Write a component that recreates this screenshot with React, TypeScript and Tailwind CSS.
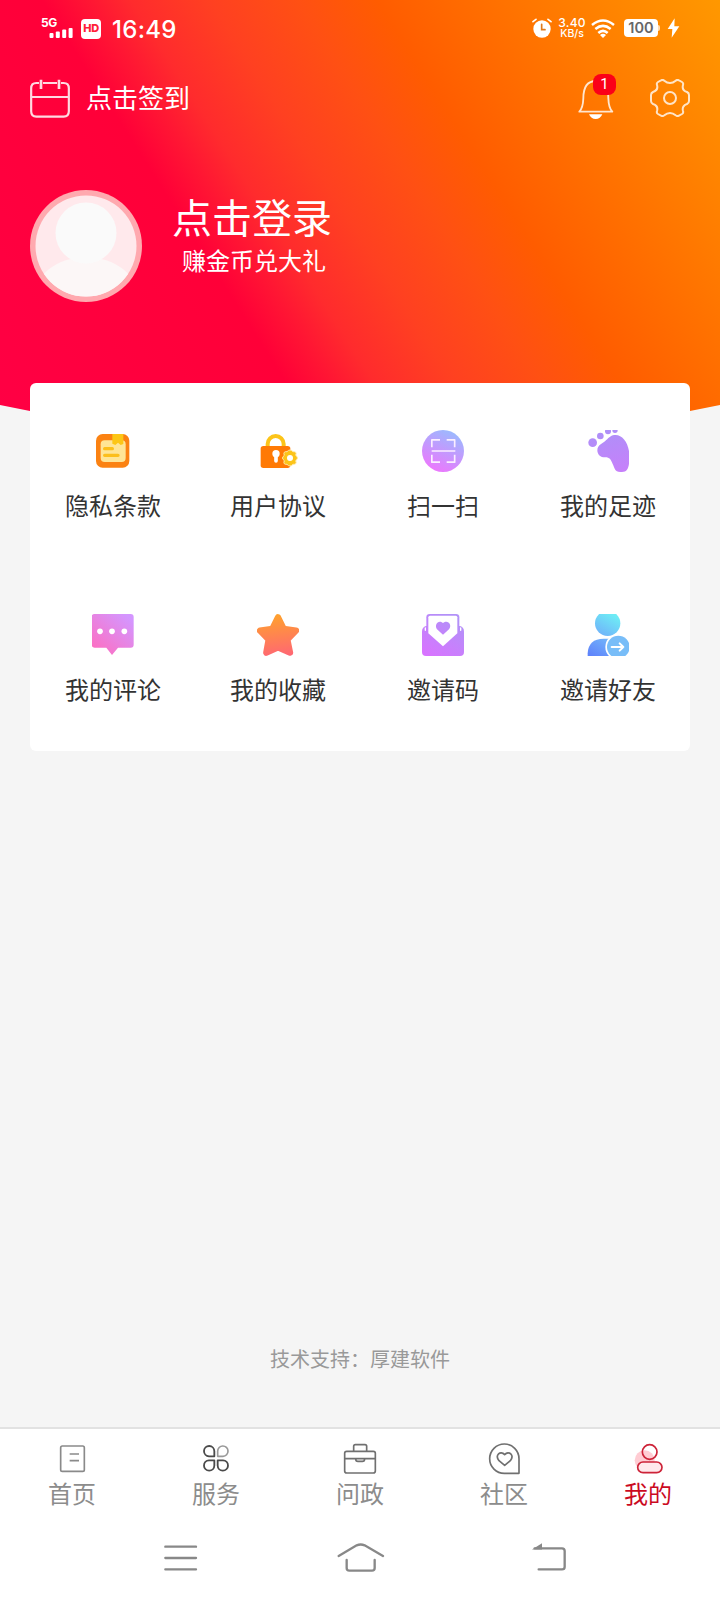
import type { ReactNode } from 'react'

interface MenuEntry {
  readonly label: string
  readonly icon: ReactNode
}

interface TabEntry extends MenuEntry {
  readonly active?: boolean
}

/* ---------- status bar ---------- */

function SignalIcon() {
  return (
    <div className="flex h-[22px] w-8 flex-col">
      <span className="h-[11px] font-['Inter',sans-serif] text-[12px] leading-[11px] font-bold tracking-[-0.3px]">5G</span>
      <svg className="h-[11px] w-8" viewBox="0 0 32 11" fill="white">
        <rect x="8.5" y="5" width="4" height="5" rx="1" />
        <rect x="14.8" y="3.6" width="4" height="6.4" rx="1" />
        <rect x="21.2" y="1.6" width="4" height="8.4" rx="1" />
        <rect x="27.6" y="0" width="4" height="10" rx="1" />
      </svg>
    </div>
  )
}

function AlarmIcon() {
  return (
    <svg className="size-5" viewBox="0 0 60 60" fill="none" strokeLinecap="round">
      <circle cx="30" cy="33" r="26" fill="white" />
      <path d="M3 11 12 4M57 11 48 4" stroke="white" strokeWidth="5" />
      <path d="M29 19v16h10" stroke="#e07a1c" strokeWidth="5" />
    </svg>
  )
}

function WifiIcon() {
  return (
    <svg className="h-[19px] w-6" viewBox="0 0 72 57" fill="none" stroke="white" strokeWidth="7.5">
      <path d="M3 18Q36-9 69 18" />
      <path d="M13 30Q36 11 59 30" />
      <path d="M22 42Q36 29 50 42" />
      <path d="M27 48Q36 41 45 48L36 57Z" fill="white" stroke="none" />
    </svg>
  )
}

function StatusBar() {
  return (
    <div className="flex h-14 items-center justify-between pr-10 pl-[41px] text-white">
      <div className="flex items-center">
        <SignalIcon />
        <span className="mt-px ml-2 flex size-5 items-center justify-center rounded-[4px] bg-white font-['Inter',sans-serif] text-[11px] leading-none font-extrabold tracking-tight text-[#ff2038]">
          HD
        </span>
        <span className="mt-[3px] ml-[11px] font-['Inter',sans-serif] text-[24px] leading-none font-medium tracking-[0.3px]">
          16:49
        </span>
      </div>
      <div className="flex items-center">
        <AlarmIcon />
        <div className="ml-[6px] flex w-7 flex-col items-center font-['Inter',sans-serif] font-medium">
          <span className="h-[12px] text-[12px] leading-[12px] tracking-[0.2px]">3.40</span>
          <span className="h-[10px] text-[10.5px] leading-[10px]">KB/s</span>
        </div>
        <div className="ml-[5px]">
          <WifiIcon />
        </div>
        <span className="ml-[9px] flex h-[18px] w-[34px] items-center justify-center rounded-[4px] bg-white font-['Inter',sans-serif] text-[14.5px] leading-none font-semibold text-[#666]">
          100
        </span>
        <span className="h-[6px] w-[2px] rounded-r-sm bg-white/70" />
        <svg className="ml-[7px] h-5 w-[13px]" viewBox="0 0 39 60" fill="white">
          <path d="M23 1 2 33h14l-2 26L37 25H22Z" />
        </svg>
      </div>
    </div>
  )
}

/* ---------- header ---------- */

function CalendarIcon() {
  return (
    <svg className="h-[39px] w-10" viewBox="0 0 120 117" fill="none" stroke="white" strokeWidth="6.5" strokeOpacity=".85">
      <path d="M27 12H19Q3.500 12 3.500 28V97Q3.500 113 19 113H101Q116.500 113 116.500 97V28Q116.500 12 101 12H93M39 12H81M4 54H116" />
      <path d="M33 2v28M87 2v28" strokeWidth="8" />
    </svg>
  )
}

function BellIcon() {
  return (
    <svg className="h-10 w-9" viewBox="0 0 108 120" fill="none" stroke="white" strokeOpacity=".82" strokeWidth="5.5">
      <path d="M4 95Q15 84 16 55C16 20 30 3 54 3S91 20 91 55Q92 84 103 95Z" strokeLinejoin="round" />
      <path d="M33 103H73Q67 117 53 117T33 103Z" fill="white" stroke="none" />
    </svg>
  )
}

function GearIcon() {
  return (
    <svg className="h-[38px] w-10" viewBox="0 0 120 114" fill="none" stroke="white" strokeOpacity=".78" strokeWidth="6" strokeLinejoin="round">
      <path d="M33 4Q38 1 43 5Q51 12 60 12T77 5Q82 1 87 4L96 9Q101 12 99 18C96 29 101 36 111 39Q117 42 117 48V66Q117 72 111 75C101 78 96 86 99 96Q101 102 96 105L87 110Q82 113 77 109Q69 102 60 102T43 109Q38 113 33 110L24 105Q19 102 21 96C24 86 19 78 9 75Q3 72 3 66V48Q3 42 9 39C19 36 24 28 21 18Q19 12 24 9Z" />
      <circle cx="60" cy="57" r="18" />
    </svg>
  )
}

function Avatar() {
  return (
    <svg className="size-28" viewBox="0 0 112 112">
      <clipPath id="avatarClip">
        <circle cx="56" cy="56" r="50.5" />
      </clipPath>
      <circle cx="56" cy="56" r="56" fill="#ffa9af" />
      <circle cx="56" cy="56" r="50.5" fill="#ffe9ec" />
      <g clipPath="url(#avatarClip)">
        <ellipse cx="56" cy="110" rx="53" ry="43" fill="#fcf7f7" />
        <circle cx="56" cy="43" r="30.5" fill="#fafafa" />
      </g>
    </svg>
  )
}

function Header() {
  return (
    <header className="h-[412px] bg-[linear-gradient(57.5deg,#ff0044_0%,#ff0038_31%,#ff1733_36%,#ff2b2d_40%,#ff4021_48%,#ff5013_57%,#ff5c00_65%,#ff9800_100%)] [clip-path:polygon(0_0,100%_0,100%_405px,690px_411px,30px_411px,0_405px)]">
      <StatusBar />
      <div className="flex h-[84px] items-center justify-between px-[30px] text-white">
        <div className="flex items-center gap-4">
          <CalendarIcon />
          <span className="-mt-[2px] text-[26px] leading-9">点击签到</span>
        </div>
        <div className="flex items-center">
          <div className="relative mt-[3px] mr-9">
            <BellIcon />
            <span className="absolute -top-[6px] left-[15px] flex h-[21px] w-[23px] items-center justify-center rounded-[8px] bg-[#fb0018] font-['Roboto',sans-serif] text-[15px] leading-none">
              1
            </span>
          </div>
          <GearIcon />
        </div>
      </div>
      <div className="mt-[50px] flex px-[30px] text-white">
        <Avatar />
        <div className="-mt-[2px] ml-[30px]">
          <p className="text-[40px] leading-14">点击登录</p>
          <p className="ml-[10px] text-[24px] leading-8">赚金币兑大礼</p>
        </div>
      </div>
    </header>
  )
}

/* ---------- menu card icons, all on a 126 grid ---------- */

function MenuIcon({ children }: { readonly children: ReactNode }) {
  return (
    <svg className="size-[42px]" viewBox="0 0 126 126" fill="none">
      {children}
    </svg>
  )
}

const menuEntries: MenuEntry[] = [
  {
    label: '隐私条款',
    icon: (
      <MenuIcon>
        <rect x="12" y="12" width="100" height="101" rx="20" fill="#fb8212" />
        <rect x="26" y="31" width="75" height="65" rx="12" fill="#ffe596" />
        <path d="M61 12H94V42L86 45 78 38 70 45 61 41Z" fill="#fcc616" />
        <path d="M38 56H61M38 76H78" stroke="#fcbf1c" strokeWidth="10" strokeLinecap="round" />
      </MenuIcon>
    ),
  },
  {
    label: '用户协议',
    icon: (
      <MenuIcon>
        <path d="M33 50V42a24 24 0 0 1 48 0V50" transform="translate(-1 0)" stroke="#fcc419" strokeWidth="12" />
        <rect x="11" y="48" width="89" height="66" rx="8" fill="#ff7a05" />
        <circle cx="57" cy="71" r="11" fill="white" />
        <path d="M57 75V93" stroke="white" strokeWidth="11" strokeLinecap="round" />
        <g fill="#fcc419" stroke="#ffe9a8" strokeWidth="3">
          <path d="M90 65Q99 55 108 65Q121 64 116 76Q127 84 116 92Q121 104 108 103Q99 113 90 103Q77 104 82 92Q71 84 82 76Q77 64 90 65Z" />
        </g>
        <circle cx="99" cy="84" r="9" fill="white" />
      </MenuIcon>
    ),
  },
  {
    label: '扫一扫',
    icon: (
      <MenuIcon>
        <linearGradient id="scanFill" x1=".3" y1="1" x2=".75" y2="0">
          <stop stopColor="#ee76fd" />
          <stop offset="1" stopColor="#98bcfe" />
        </linearGradient>
        <circle cx="63" cy="63" r="63" fill="url(#scanFill)" />
        <path d="M29.500 52V29.500H54M74 29.500H98V52M29.500 74V96.500H54M74 96.500H98V74M29 63H100" stroke="#fbeeff" strokeWidth="5" strokeLinejoin="round" />
      </MenuIcon>
    ),
  },
  {
    label: '我的足迹',
    icon: (
      <MenuIcon>
        <linearGradient id="footFill" gradientUnits="userSpaceOnUse" x1="60" y1="0" x2="80" y2="126">
          <stop stopColor="#ae90f8" />
          <stop offset="1" stopColor="#c680fa" />
        </linearGradient>
        <g fill="url(#footFill)">
          <circle cx="17" cy="38" r="13" />
          <circle cx="40" cy="18" r="10" />
          <circle cx="63" cy="4" r="9" />
          <circle cx="84" cy="1" r="8" />
          <path d="M86 15C108 15 128 43 127 80C127 105 125 126 105 126C82 127 84 115 77 102C71 88 68 82 55 82C39 82 32 73 31 62C31 44 47 41 57 31C67 21 73 15 86 15Z" />
        </g>
      </MenuIcon>
    ),
  },
  {
    label: '我的评论',
    icon: (
      <MenuIcon>
        <linearGradient id="commentFill" x1=".1" y1="1" x2=".9" y2=".1">
          <stop stopColor="#ff6dbf" />
          <stop offset="1" stopColor="#d496ff" />
        </linearGradient>
        <path d="M8 0H116Q125 0 125 9V92Q125 101 116 101H78L60 123 43 101H8Q-1 101-1 92V9Q-1 0 8 0Z" fill="url(#commentFill)" />
        <g fill="white">
          <circle cx="24" cy="52" r="8.500" />
          <circle cx="60" cy="52" r="8.500" />
          <circle cx="97" cy="52" r="8.500" />
        </g>
      </MenuIcon>
    ),
  },
  {
    label: '我的收藏',
    icon: (
      <MenuIcon>
        <linearGradient id="starFill" gradientUnits="userSpaceOnUse" x1="55" y1="0" x2="70" y2="126">
          <stop stopColor="#ffa22c" />
          <stop offset="1" stopColor="#ff6773" />
        </linearGradient>
        <path
          d="M63 10 80 45 117 50 91 77 99 116 63 100 28 116 35 77 9 50 46 45Z"
          fill="url(#starFill)"
          stroke="url(#starFill)"
          strokeWidth="19"
          strokeLinejoin="round"
        />
      </MenuIcon>
    ),
  },
  {
    label: '邀请码',
    icon: (
      <MenuIcon>
        <linearGradient id="mailFill" gradientUnits="userSpaceOnUse" x1="20" y1="126" x2="90" y2="10">
          <stop stopColor="#d873ff" />
          <stop offset="1" stopColor="#b291f8" />
        </linearGradient>
        <path d="M12 36H114Q126 40 126 52V114Q126 126 114 126H12Q0 126 0 114V52Q0 40 12 36Z" fill="url(#mailFill)" />
        <path d="M13 60V10Q13 0 23 0H102Q112 0 112 10V60Z" fill="url(#mailFill)" />
        <path d="M19 10Q19 5 24 5H101Q106 5 106 10V58L63 97 19 58Z" fill="white" />
        <path d="M10 42V49M116 42V49" stroke="white" strokeWidth="4" strokeLinecap="round" />
        <path d="M63 62 45 46C36 32 49 15 63 27C77 15 92 32 81 46Z" fill="url(#mailFill)" />
      </MenuIcon>
    ),
  },
  {
    label: '邀请好友',
    icon: (
      <MenuIcon>
        <linearGradient id="friendFill" gradientUnits="userSpaceOnUse" x1="15" y1="126" x2="85" y2="5">
          <stop stopColor="#5f84fb" />
          <stop offset=".45" stopColor="#70b0fa" />
          <stop offset="1" stopColor="#6eecf5" />
        </linearGradient>
        <circle cx="62" cy="28" r="38" fill="url(#friendFill)" />
        <path d="M2 126V118Q4 74 50 74H85V126Z" fill="url(#friendFill)" />
        <circle cx="94" cy="99" r="39" fill="white" />
        <circle cx="94" cy="99" r="34" fill="#78bdf8" />
        <path d="M74 99H109M98 88 109 99 98 110" stroke="white" strokeWidth="6" strokeLinecap="round" strokeLinejoin="round" />
      </MenuIcon>
    ),
  },
]

function MenuCard() {
  return (
    <section className="relative mx-[30px] -mt-[29px] grid grid-cols-4 rounded-[6px] bg-white">
      {menuEntries.map((entry) => (
        <a key={entry.label} className="flex h-[184px] flex-col items-center pt-[47px]">
          {entry.icon}
          <span className="mt-[15px] pl-px text-[24px] leading-9 text-[#333]">{entry.label}</span>
        </a>
      ))}
    </section>
  )
}

/* ---------- bottom tabs, icons on a 120x108 grid ---------- */

function TabIcon({ children }: { readonly children: ReactNode }) {
  return (
    <svg className="h-9 w-10" viewBox="0 0 120 108" fill="none" stroke="#707070" strokeWidth="5" strokeLinejoin="round">
      {children}
    </svg>
  )
}

const tabs: TabEntry[] = [
  {
    label: '首页',
    icon: (
      <TabIcon>
        <rect x="26" y="15" width="71" height="76" rx="5" stroke="#8a8a8a" />
        <path d="M53 39H81M53 59H81" stroke="#8a8a8a" />
      </TabIcon>
    ),
  },
  {
    label: '服务',
    icon: (
      <TabIcon>
        <g stroke="#4a4a4a" strokeWidth="5.500">
          <path d="M55 46H39A15.500 15.500 0 1 1 55 30.500Z" />
          <path d="M55 58H39A15.500 15.500 0 1 0 55 73.500Z" />
          <path d="M65 58H81A15.500 15.500 0 1 1 65 73.500Z" />
        </g>
        <path d="M65 46H81A15.500 15.500 0 1 0 65 30.500Z" stroke="#999" />
      </TabIcon>
    ),
  },
  {
    label: '问政',
    icon: (
      <TabIcon>
        <rect x="14" y="31" width="92" height="65" rx="6" />
        <path d="M41 31V16Q41 11 46 11H75Q80 11 80 16V31M14 53H106M47 53Q47 61 54 61H67Q74 61 74 53" />
      </TabIcon>
    ),
  },
  {
    label: '社区',
    icon: (
      <TabIcon>
        <path d="M105 97H61A44 44 0 1 1 105 53Z" />
        <path d="M62 73 45 59C32 43 49 27 62 41C75 27 92 43 79 59Z" />
      </TabIcon>
    ),
  },
  {
    label: '我的',
    active: true,
    icon: (
      <TabIcon>
        <circle cx="50" cy="58" r="30" fill="#ffccd3" stroke="none" />
        <g stroke="#cd2338">
          <circle cx="65" cy="33" r="22" />
          <rect x="29" y="63" width="73" height="32" rx="16" fill="#ffe9ec" />
        </g>
      </TabIcon>
    ),
  },
]

function TabBar() {
  return (
    <nav className="grid h-[91px] grid-cols-5 border-t-2 border-[#e2e2e2] bg-white pt-3">
      {tabs.map((tab) => (
        <a key={tab.label} className="flex flex-col items-center">
          {tab.icon}
          <span className={`-mt-[2px] text-[24px] leading-9 ${tab.active ? 'text-[#cb0a1f]' : 'text-[#8c8c8c]'}`}>
            {tab.label}
          </span>
        </a>
      ))}
    </nav>
  )
}

function SystemNav() {
  return (
    <div className="grid h-[82px] grid-cols-3 place-items-center bg-white px-[90px]">
      <svg className="h-8 w-[72px]" viewBox="0 0 216 96" fill="none" stroke="#888" strokeWidth="7" strokeLinecap="round">
        <path d="M64 11H156M64 45H156M64 79H156" />
      </svg>
      <svg className="h-8 w-[72px]" viewBox="0 0 216 96" fill="none" stroke="#888" strokeWidth="7" strokeLinecap="round">
        <path d="M44 39 98 7Q110 2 122 7L177 39" />
        <path d="M68 51V75Q68 83 76 83H144Q152 83 152 75V51" />
      </svg>
      <svg className="h-8 w-[72px]" viewBox="0 0 216 96" fill="none" stroke="#888" strokeWidth="7" strokeLinecap="round">
        <path d="M92 16H174Q182 16 182 24V71Q182 79 174 79H104" />
        <path d="M84 19.500 114 1V19.500Z" fill="#888" stroke="none" />
      </svg>
    </div>
  )
}

export default function App() {
  return (
    <div className="flex h-[1600px] w-[720px] flex-col overflow-hidden bg-[#f5f5f5] font-['Noto_Sans_CJK_SC',sans-serif]">
      <Header />
      <MenuCard />
      <p className="mt-auto mb-[53px] text-center text-[20px] leading-[30px] text-[#999]">技术支持：厚建软件</p>
      <TabBar />
      <SystemNav />
    </div>
  )
}
